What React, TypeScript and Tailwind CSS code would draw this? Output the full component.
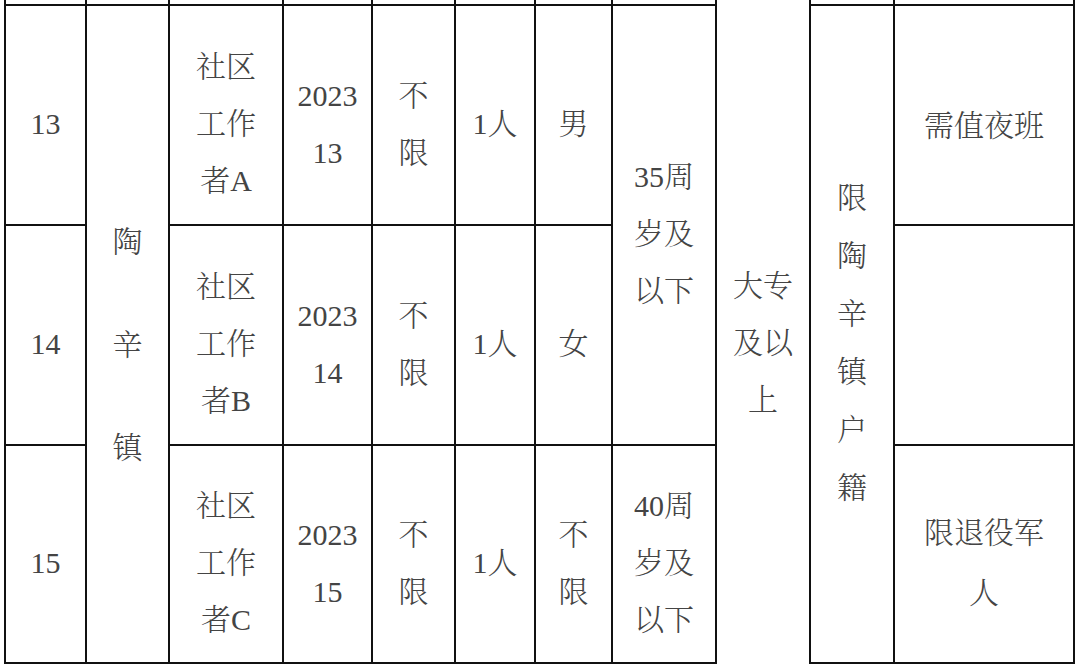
import React from "react";

const B = "border-[#111] border-l-2";
const C =
  "flex items-center justify-center text-center border-[#111] border-l-2 border-t-2 pt-[17px]";

function Lines({ lines, lh = "leading-[57px]" }: { lines: string[]; lh?: string }) {
  return (
    <div className={lh}>
      {lines.map((l, i) => (
        <div key={i} className="whitespace-nowrap">
          {l}
        </div>
      ))}
    </div>
  );
}

export default function App() {
  return (
    <div className="w-[1080px] h-[669px] bg-white overflow-hidden">
      <div
        className="ml-[4px] grid grid-cols-[81px_83px_114px_89px_83px_80px_77px_104px_94px_84px_182px] grid-rows-[4px_220px_220px_220px] text-[30px] text-[#444] font-light font-[family-name:'Liberation_Serif','Noto_Serif_CJK_SC','Noto_Sans_CJK_SC',serif]"
      >
        {/* top strip */}
        <div className={`${B} col-start-1 row-start-1`} />
        <div className={`${B} col-start-2 row-start-1`} />
        <div className={`${B} col-start-3 row-start-1`} />
        <div className={`${B} col-start-4 row-start-1`} />
        <div className={`${B} col-start-5 row-start-1`} />
        <div className={`${B} col-start-6 row-start-1`} />
        <div className={`${B} col-start-7 row-start-1`} />
        <div className={`${B} col-start-8 row-start-1`} />
        <div className={`${B} col-start-10 row-start-1`} />
        <div className={`${B} border-r-2 col-start-11 row-start-1`} />

        {/* 大专及以上 spanning all */}
        <div className="flex items-center justify-center text-center border-[#111] border-l-2 pt-[21px] col-start-9 row-start-1 row-span-4">
          <Lines lines={["大专", "及以", "上"]} />
        </div>

        {/* row 13 */}
        <div className={`${C} col-start-1 row-start-2`}>13</div>
        <div className={`${C} col-start-2 row-start-2 row-span-3 border-b-2 pt-[20px]`}>
          <Lines lines={["陶", "辛", "镇"]} lh="leading-[103px]" />
        </div>
        <div className={`${C} col-start-3 row-start-2`}>
          <Lines lines={["社区", "工作", "者A"]} />
        </div>
        <div className={`${C} col-start-4 row-start-2`}>
          <Lines lines={["2023", "13"]} />
        </div>
        <div className={`${C} col-start-5 row-start-2`}>
          <Lines lines={["不", "限"]} />
        </div>
        <div className={`${C} col-start-6 row-start-2`}>1人</div>
        <div className={`${C} col-start-7 row-start-2`}>男</div>
        <div className={`${C} col-start-8 row-start-2 row-span-2`}>
          <Lines lines={["35周", "岁及", "以下"]} />
        </div>
        <div className={`${C} col-start-10 row-start-2 row-span-3 border-b-2`}>
          <Lines lines={["限", "陶", "辛", "镇", "户", "籍"]} lh="leading-[58px]" />
        </div>
        <div className={`${C} col-start-11 row-start-2 border-r-2 pt-[20px]`}>需值夜班</div>

        {/* row 14 */}
        <div className={`${C} col-start-1 row-start-3`}>14</div>
        <div className={`${C} col-start-3 row-start-3`}>
          <Lines lines={["社区", "工作", "者B"]} />
        </div>
        <div className={`${C} col-start-4 row-start-3`}>
          <Lines lines={["2023", "14"]} />
        </div>
        <div className={`${C} col-start-5 row-start-3`}>
          <Lines lines={["不", "限"]} />
        </div>
        <div className={`${C} col-start-6 row-start-3`}>1人</div>
        <div className={`${C} col-start-7 row-start-3`}>女</div>
        <div className={`${C} col-start-11 row-start-3 border-r-2`} />

        {/* row 15 */}
        <div className={`${C} col-start-1 row-start-4 border-b-2`}>15</div>
        <div className={`${C} col-start-3 row-start-4 border-b-2`}>
          <Lines lines={["社区", "工作", "者C"]} />
        </div>
        <div className={`${C} col-start-4 row-start-4 border-b-2`}>
          <Lines lines={["2023", "15"]} />
        </div>
        <div className={`${C} col-start-5 row-start-4 border-b-2`}>
          <Lines lines={["不", "限"]} />
        </div>
        <div className={`${C} col-start-6 row-start-4 border-b-2`}>1人</div>
        <div className={`${C} col-start-7 row-start-4 border-b-2`}>
          <Lines lines={["不", "限"]} />
        </div>
        <div className={`${C} col-start-8 row-start-4 border-b-2`}>
          <Lines lines={["40周", "岁及", "以下"]} />
        </div>
        <div className={`${C} col-start-11 row-start-4 border-r-2 border-b-2`}>
          <Lines lines={["限退役军", "人"]} lh="leading-[60px]" />
        </div>
      </div>
    </div>
  );
}
